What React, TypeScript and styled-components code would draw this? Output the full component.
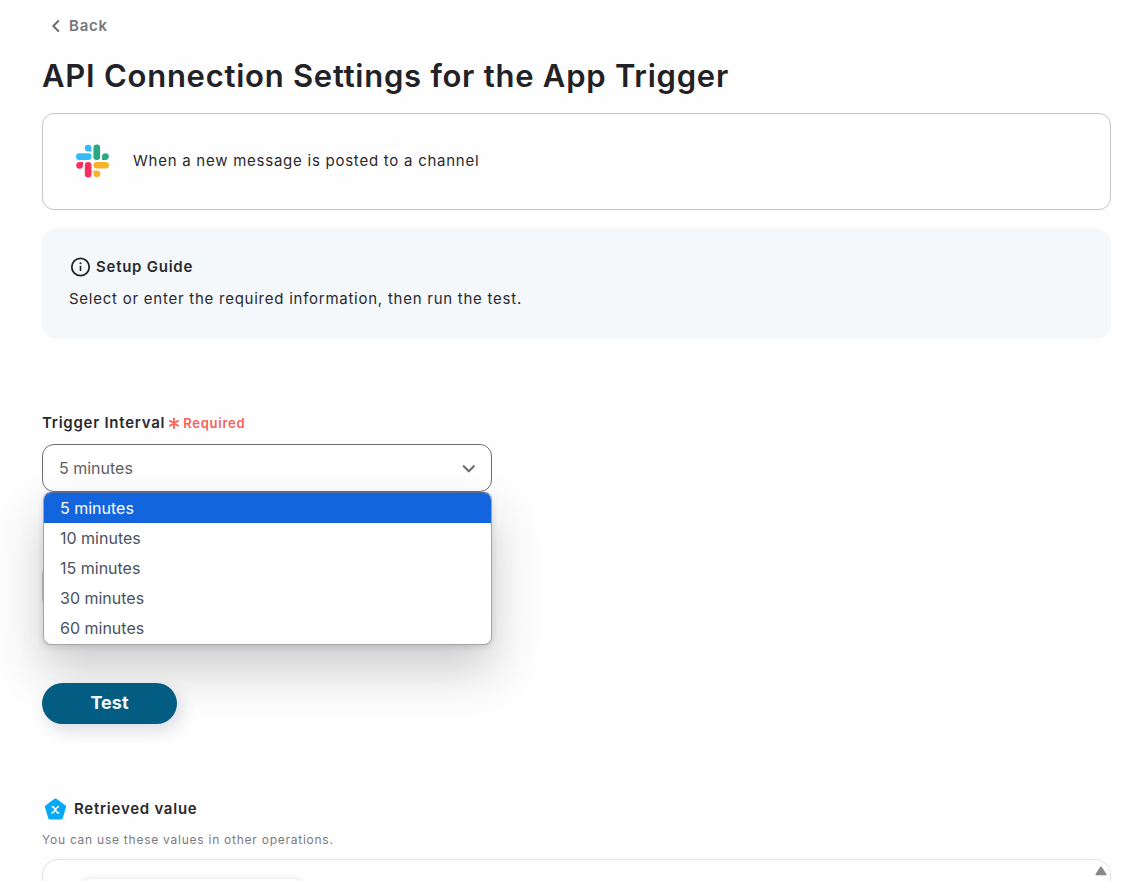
import React, { useState } from "react";
import styled, { createGlobalStyle } from "styled-components";

const GlobalStyle = createGlobalStyle`
  *, *::before, *::after { box-sizing: border-box; }
  body {
    margin: 0;
    background: #fefefe;
    color: #29292d;
    font-family: Inter, "Liberation Sans", sans-serif;
    font-size: 15px;
    line-height: 24px;
    letter-spacing: 0.05em;
  }
  button, select { font: inherit; letter-spacing: inherit; }
`;

const Page = styled.main`
  display: flex;
  flex-direction: column;
  height: 100vh;
  overflow: hidden;
  padding: 14px 25px 0 42px;
`;

const BackLink = styled.a`
  display: flex;
  align-items: center;
  align-self: flex-start;
  gap: 8px;
  padding-left: 9px;
  color: #77777a;
  font-weight: 600;
  text-decoration: none;
`;

const Title = styled.h1`
  margin: 16px 0 15px;
  color: #222226;
  font-size: 31px;
  line-height: 44px;
  font-weight: 600;
`;

const TriggerCard = styled.section`
  display: flex;
  flex: none;
  align-items: center;
  gap: 24px;
  min-height: 97px;
  padding: 0 33px 2px;
  border: 1px solid #c6c6c8;
  border-radius: 12px;
`;

const GuideCard = styled.section`
  flex: none;
  margin-top: 18px;
  padding: 27px 27px 28px;
  border-radius: 16px;
  background: #f4f8fb;
`;

const GuideTitle = styled.h2`
  display: flex;
  align-items: center;
  gap: 4px;
  margin: 0 0 8px;
  font-size: 15px;
  line-height: 24px;
  font-weight: 600;
`;

const Text = styled.p`
  margin: 0;
`;

const Form = styled.form`
  display: flex;
  flex: none;
  flex-direction: column;
  align-items: flex-start;
  margin-top: 72px;
`;

const Field = styled.div`
  position: relative;
  width: 450px;
  max-width: 100%;
`;

const Label = styled.label`
  display: flex;
  align-items: center;
  gap: 4px;
  margin-bottom: 9px;
  font-weight: 600;
`;

const Required = styled.span`
  display: flex;
  align-items: center;
  gap: 4px;
  color: #fb5f5b;
  font-size: 13px;
  line-height: 24px;
`;

const SelectBox = styled.div`
  position: relative;
  display: grid;
  align-items: center;
`;

const Select = styled.select`
  appearance: none;
  width: 100%;
  height: 48px;
  padding: 0 40px 0 16px;
  border: 1px solid #6f6f72;
  border-radius: 12px;
  background: #fff;
  color: #5f5f63;
  font-size: 16px;
  letter-spacing: 0;
`;

const ChannelField = styled(Field)`
  padding-top: 70px;

  ${Select} {
    border-color: #c6c6c8;
  }
`;

const Chevron = styled.svg`
  position: absolute;
  right: 16px;
  pointer-events: none;
`;

const Menu = styled.ul`
  position: absolute;
  z-index: 1;
  top: 100%;
  left: 1px;
  right: 0;
  margin: 0;
  padding: 0 0 1px;
  overflow: hidden;
  list-style: none;
  border: 1px solid #a5a5a8;
  border-top-color: #5a6a90;
  border-radius: 8px;
  background: #fff;
  font-size: 16px;
  letter-spacing: 0;
  box-shadow: 0 24px 48px rgba(40, 36, 46, 0.24), 0 2px 6px rgba(40, 36, 46, 0.14);
`;

const Option = styled.li<{ $active: boolean }>`
  padding: 0 16px;
  line-height: 30px;
  color: ${(p) => (p.$active ? "#fff" : "#4b5260")};
  background: ${(p) => (p.$active ? "#1265dc" : "transparent")};
`;

const TestButton = styled.button`
  position: relative;
  z-index: 2;
  width: 135px;
  height: 41px;
  margin-top: 73px;
  padding: 0 0 2px;
  border: 0;
  border-radius: 24px;
  background: #035d82;
  color: #f2f7fa;
  font-size: 18px;
  font-weight: 700;
  letter-spacing: 0;
  box-shadow: 4px 6px 16px rgba(60, 60, 110, 0.18);
`;

const ResultHead = styled.h2`
  display: flex;
  align-items: center;
  gap: 6px;
  margin: 73px 0 8px;
  font-size: 15px;
  line-height: 24px;
  font-weight: 600;
`;

const Note = styled.p`
  margin: 0 0 8px;
  color: #7b7b7f;
  font-size: 12px;
  line-height: 22px;
`;

const ResultPanel = styled.section`
  position: relative;
  flex: 1;
  min-height: 22px;
  padding: 19px 36px 0;
  overflow: hidden;
  border: 1px solid #e3e3e5;
  border-bottom: 0;
  border-radius: 16px 16px 0 0;
`;

const ResultCard = styled.div`
  width: 226px;
  height: 56px;
  border-radius: 12px;
  background: #fff;
  box-shadow: 0 0 6px rgba(60, 60, 70, 0.12);
`;

const ScrollUp = styled.button`
  position: absolute;
  top: 0;
  right: 0;
  display: grid;
  place-items: center;
  width: 19px;
  height: 22px;
  padding: 0;
  border: 0;
  background: #fefefe;
`;

const SlackLogo = () => (
  <svg width="33" height="34" viewBox="0 0 34 34" aria-hidden="true">
    <g fill="#33bbf7">
      <path d="M16 7.2H12.5A3.5 3.5 0 1 1 16 3.6Z" />
      <rect x="0" y="9.1" width="16" height="6.8" rx="3.4" />
    </g>
    <g fill="#2ba781">
      <rect x="18" y="0" width="6.9" height="16" rx="3.4" />
      <path d="M26.8 15.9v-3.5a3.5 3.5 0 1 1 3.5 3.5Z" />
    </g>
    <g fill="#f8b12b">
      <rect x="18" y="18" width="16" height="6.8" rx="3.4" />
      <path d="M18 26.7H21.4A3.5 3.5 0 1 1 18 30.2Z" />
    </g>
    <g fill="#f4315f">
      <rect x="9.1" y="18" width="6.9" height="16" rx="3.4" />
      <path d="M7.2 18V21.4A3.5 3.5 0 1 1 3.6 18Z" />
    </g>
  </svg>
);

const InfoIcon = () => (
  <svg width="23" height="22" viewBox="0 0 23 22" fill="none" stroke="#222226" aria-hidden="true">
    <circle cx="11.5" cy="11" r="8.7" strokeWidth="1.8" />
    <path d="M11.5 9.8v5.2" strokeWidth="1.6" />
    <circle cx="11.5" cy="7.2" r="1" fill="#222226" stroke="none" />
  </svg>
);

const VariableIcon = () => (
  <svg width="26" height="24" viewBox="0 0 26 24" aria-hidden="true">
    <path
      d="M13.5 3 22.7 9.6 19.3 20.9H7.7L4.3 9.6Z"
      fill="#06aaf5"
      stroke="#06aaf5"
      strokeWidth="3"
      strokeLinejoin="round"
    />
    <path
      d="M9.6 9.7h1.1c.6 0 .9.3 1.2.8l2.9 4.6c.3.5.6.8 1.2.8h1.2M17 9.6c-1.6 0-2.4 1.4-3.5 3-1.2 1.9-2.2 3.5-4.1 3.3"
      fill="none"
      stroke="#fff"
      strokeWidth="1.5"
    />
  </svg>
);

const DownIcon = () => (
  <Chevron width="14" height="10" viewBox="0 0 14 10" fill="none" aria-hidden="true">
    <path d="M1.8 3.2 6.8 8.2 11.8 3.2" stroke="#6f6f72" strokeWidth="2.2" strokeLinecap="round" strokeLinejoin="round" />
  </Chevron>
);

const intervals = ["5 minutes", "10 minutes", "15 minutes", "30 minutes", "60 minutes"];

export default function App() {
  const [interval, setInterval] = useState(intervals[0]);

  return (
    <>
      <GlobalStyle />
      <Page>
        <BackLink href="#back">
          <svg width="10" height="14" viewBox="0 0 10 14" fill="none" aria-hidden="true">
            <path d="M7.3 2 2.3 7l5 5" stroke="#6f6f72" strokeWidth="2" strokeLinecap="round" strokeLinejoin="round" />
          </svg>
          Back
        </BackLink>
        <Title>API Connection Settings for the App Trigger</Title>
        <TriggerCard>
          <SlackLogo />
          <Text>When a new message is posted to a channel</Text>
        </TriggerCard>
        <GuideCard>
          <GuideTitle>
            <InfoIcon />
            Setup Guide
          </GuideTitle>
          <Text>Select or enter the required information, then run the test.</Text>
        </GuideCard>
        <Form onSubmit={(e) => e.preventDefault()}>
          <Field>
            <Label htmlFor="interval">
              Trigger Interval
              <Required>
                <svg width="10" height="12" viewBox="0 0 10 12" stroke="#fb5f5b" strokeWidth="1.8" strokeLinecap="round" aria-hidden="true">
                  <path d="M5 1.5v9.6M.9 3.9l8.2 4.8M9.1 3.9.9 8.7" />
                </svg>
                Required
              </Required>
            </Label>
            <SelectBox>
              <Select id="interval" value={interval} onChange={(e) => setInterval(e.target.value)}>
                {intervals.map((item) => (
                  <option key={item}>{item}</option>
                ))}
              </Select>
              <DownIcon />
              <Menu role="listbox" aria-label="Trigger Interval">
                {intervals.map((item) => (
                  <Option
                    key={item}
                    role="option"
                    aria-selected={item === interval}
                    $active={item === interval}
                    onClick={() => setInterval(item)}
                  >
                    {item}
                  </Option>
                ))}
              </Menu>
            </SelectBox>
          </Field>
          <ChannelField>
            <SelectBox>
              <Select aria-label="Channel" />
            </SelectBox>
          </ChannelField>
          <TestButton type="submit">Test</TestButton>
        </Form>
        <ResultHead>
          <VariableIcon />
          Retrieved value
        </ResultHead>
        <Note>You can use these values in other operations.</Note>
        <ResultPanel>
          <ResultCard />
          <ScrollUp type="button" aria-label="Scroll up">
            <svg width="12" height="10" viewBox="0 0 12 10" aria-hidden="true">
              <path d="M6 1.2 10.8 8.5H1.2Z" fill="#88888b" stroke="#88888b" strokeWidth="1.5" strokeLinejoin="round" />
            </svg>
          </ScrollUp>
        </ResultPanel>
      </Page>
    </>
  );
}
